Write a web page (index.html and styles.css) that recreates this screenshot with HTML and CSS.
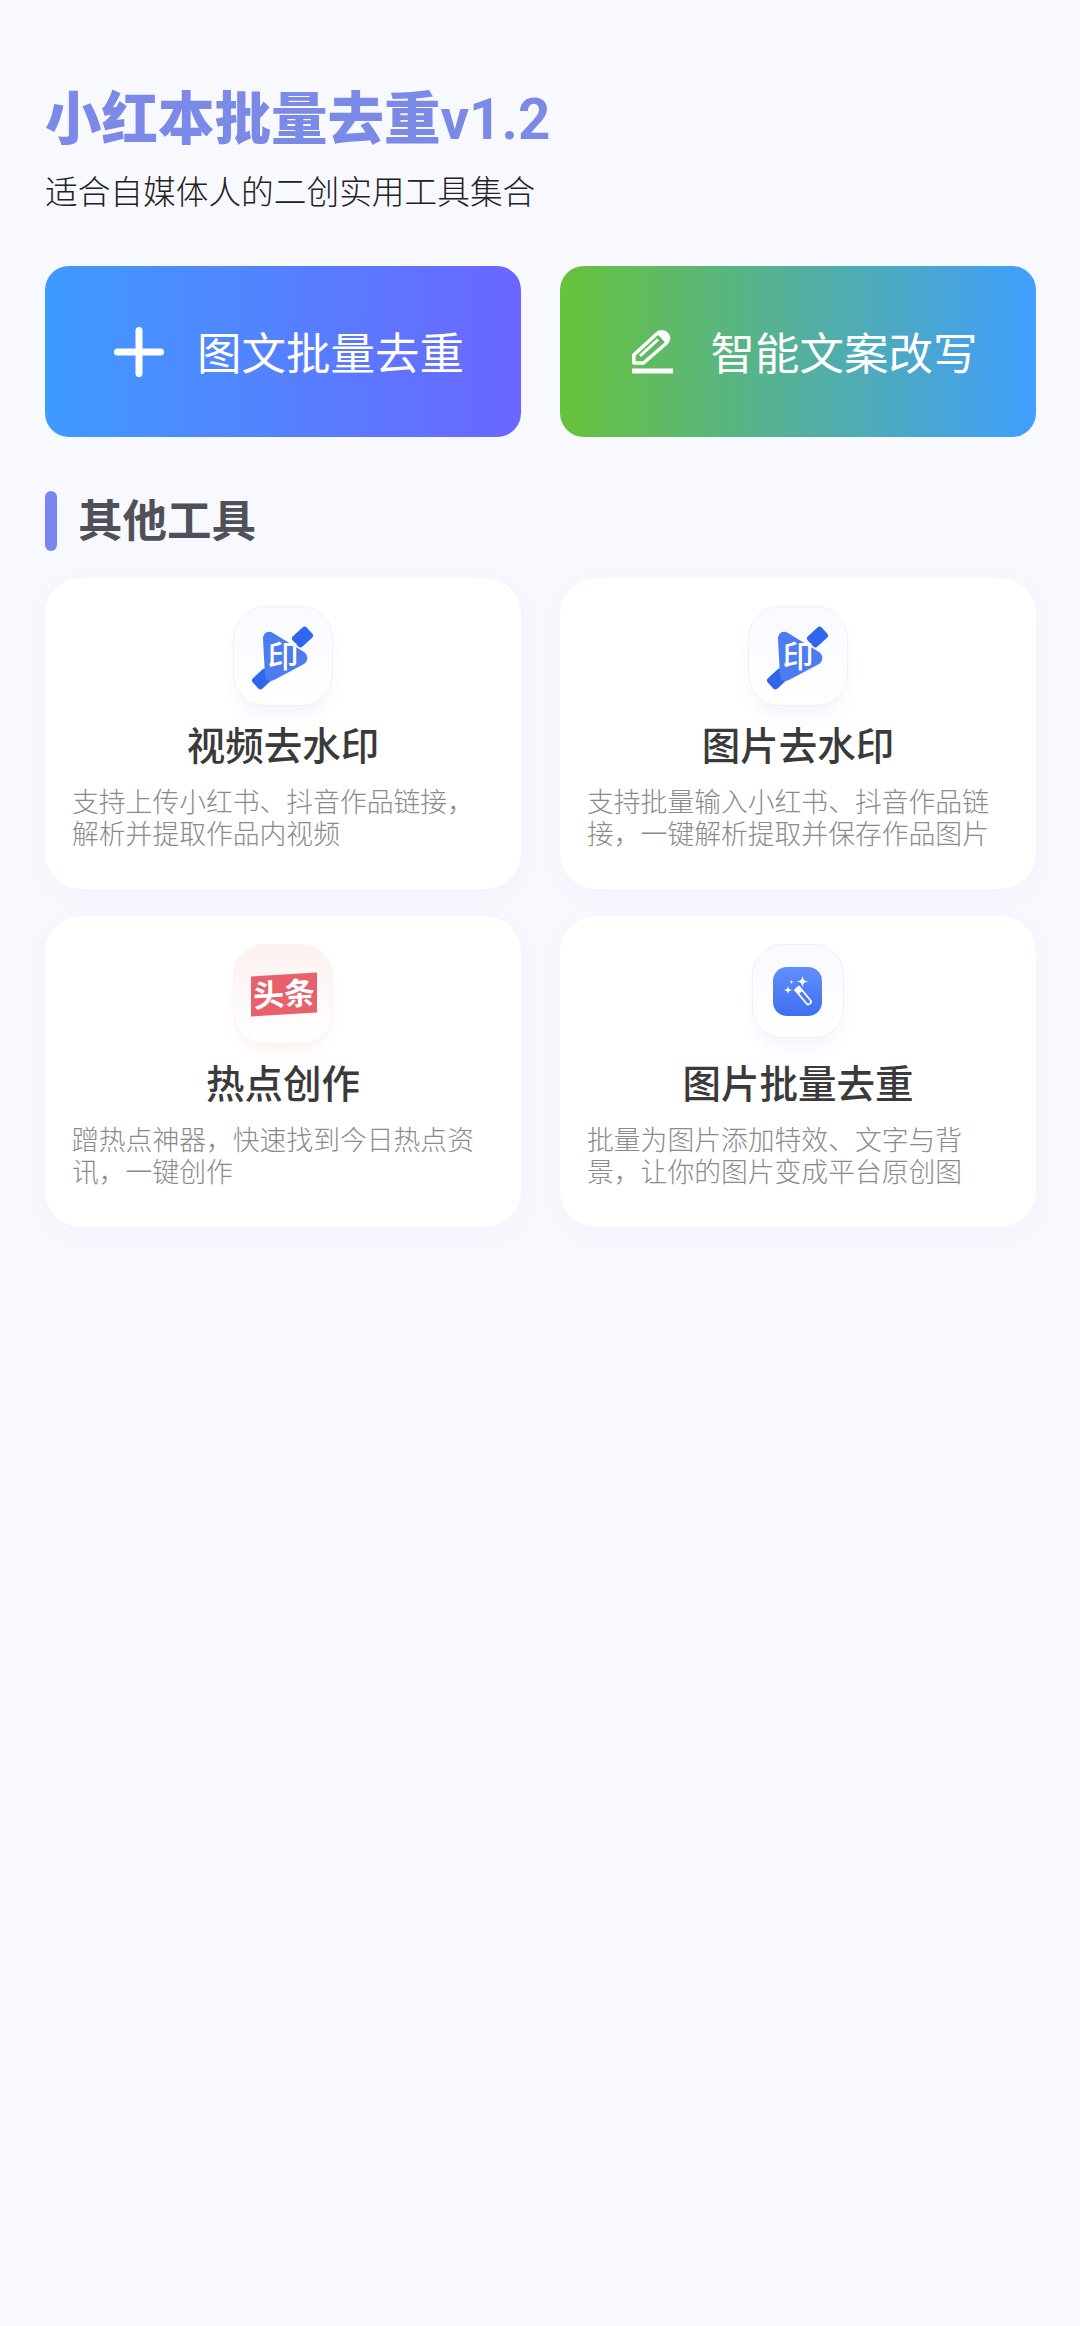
FILE: index.html
```html
<!DOCTYPE html>
<html lang="zh-CN">
<head>
    <meta charset="UTF-8">
    <meta name="viewport" content="width=device-width, initial-scale=1.0">
    <title>小红本批量去重</title>
    <link rel="stylesheet" href="styles.css">
</head>
<body>
    <div class="container">
        <h1 class="app-title">小红本批量去重<span class="app-ver">v1.2</span></h1>
        <p class="app-sub">适合自媒体人的二创实用工具集合</p>

        <div class="action-row">
            <a class="action action-blue">
                <svg class="action-icon" width="50" height="50" viewBox="0 0 50 50">
                    <path d="M25 3.5V46.5M3.5 25H46.5" stroke="#fff" stroke-width="7" stroke-linecap="round" fill="none"/>
                </svg>
                <span class="action-label">图文批量去重</span>
            </a>
            <a class="action action-green">
                <svg class="action-icon" width="42" height="46" viewBox="0 0 42 46">
                    <path d="M1.8 34V26L24 5.500C28 1.500 33.500 2.500 35.500 6C37.500 9.500 36 12.500 34 14.500L11.500 34Z" stroke="#fff" stroke-width="3.600" stroke-linejoin="round" fill="none"/>
                    <path d="M8 27L26 10.500" stroke="#fff" stroke-width="3" fill="none"/>
                    <path d="M25 4.500C29 1.500 34 3 35.500 6C37 9 36 12 34 14.500Z" fill="#fff"/>
                    <rect x="0" y="39.500" width="41" height="5" fill="#fff"/>
                </svg>
                <span class="action-label">智能文案改写</span>
            </a>
        </div>

        <div class="section-head">
            <i class="section-bar"></i>
            <h2>其他工具</h2>
        </div>

        <div class="tool-grid">
            <div class="tool-card">
                <div class="tool-icon">
                    <svg width="100" height="100" viewBox="0 0 100 100">
                        <rect x="60" y="24" width="19" height="14" rx="3" transform="rotate(-43 69.500 31)" fill="#2f66ee"/>
                        <rect x="20" y="66" width="19" height="14" rx="3" transform="rotate(-43 29.500 73)" fill="#2f66ee"/>
                        <path d="M30 33C30 27 35 24 40 27L71 46C75.500 49 75.500 55 71 58L41 74C36 76.500 32 74 32 70Z" fill="#4d7cf0"/>
                        <text class="stamp-text" x="50" y="61" font-size="31" text-anchor="middle">印</text>
                    </svg>
                </div>
                <h3>视频去水印</h3>
                <p>支持上传小红书、抖音作品链接，解析并提取作品内视频</p>
            </div>
            <div class="tool-card">
                <div class="tool-icon">
                    <svg width="100" height="100" viewBox="0 0 100 100">
                        <rect x="60" y="24" width="19" height="14" rx="3" transform="rotate(-43 69.500 31)" fill="#2f66ee"/>
                        <rect x="20" y="66" width="19" height="14" rx="3" transform="rotate(-43 29.500 73)" fill="#2f66ee"/>
                        <path d="M30 33C30 27 35 24 40 27L71 46C75.500 49 75.500 55 71 58L41 74C36 76.500 32 74 32 70Z" fill="#4d7cf0"/>
                        <text class="stamp-text" x="50" y="61" font-size="31" text-anchor="middle">印</text>
                    </svg>
                </div>
                <h3>图片去水印</h3>
                <p>支持批量输入小红书、抖音作品链接，一键解析提取并保存作品图片</p>
            </div>
            <div class="tool-card">
                <div class="tool-icon tool-icon-red">
                    <svg width="100" height="100" viewBox="0 0 100 100">
                        <path d="M18 32.500L84 28.500V68.500L18 72.500Z" fill="#e8606c"/>
                        <text class="badge-text" x="51" y="61.500" font-size="31" text-anchor="middle" transform="rotate(-3.500 51 51)">头条</text>
                    </svg>
                </div>
                <h3>热点创作</h3>
                <p>蹭热点神器，快速找到今日热点资讯，一键创作</p>
            </div>
            <div class="tool-card">
                <div class="tool-icon tool-icon-small">
                    <svg width="92" height="94" viewBox="0 0 92 94">
                        <defs>
                            <linearGradient id="wandBg" x1="0" y1="0" x2="0" y2="1">
                                <stop offset="0" stop-color="#5f8ffb"/>
                                <stop offset="1" stop-color="#3f6ff0"/>
                            </linearGradient>
                        </defs>
                        <g transform="translate(0 2)">
                            <rect x="21" y="21" width="49" height="49" rx="14" fill="url(#wandBg)"/>
                            <path d="M50.500 29C51.100 34 52 35 57 35.500C52 36 51.100 37 50.500 42C49.900 37 49 36 44 35.500C49 35 49.900 34 50.500 29Z" fill="#fff"/>
                            <path d="M36 39.500C36.500 43 37 43.500 40.500 44C37 44.500 36.500 45 36 48.500C35.500 45 35 44.500 31.500 44C35 43.500 35.500 43 36 39.500Z" fill="#fff"/>
                            <path d="M39.500 33.500C39.800 35.500 40 35.700 42 36C40 36.300 39.800 36.500 39.500 38.500C39.200 36.500 39 36.300 37 36C39 35.700 39.200 35.500 39.500 33.500Z" fill="#fff"/>
                            <path d="M43 44L47 40.500L59 55C60 56.500 56.500 59.500 55 58Z" fill="none" stroke="#fff" stroke-width="1.800" stroke-linejoin="round"/>
                            <path d="M43 44L47 40.500L50.500 44.800L46.500 48.300Z" fill="#fff"/>
                        </g>
                    </svg>
                </div>
                <h3>图片批量去重</h3>
                <p>批量为图片添加特效、文字与背景，让你的图片变成平台原创图</p>
            </div>
        </div>
    </div>
</body>
</html>
```

FILE: styles.css
```css
* {
    box-sizing: border-box;
}
body {
    margin: 0;
    background-color: #f8f9fe;
    font-family: Roboto, "Noto Sans CJK SC", sans-serif;
    color: #333;
}
.container {
    padding: 82px 44px 0 45px;
    min-height: 2326px;
}
.app-title {
    margin: 0;
    font-size: 56.5px;
    line-height: 76px;
    font-weight: 900;
    color: #7b8ae6;
}
.app-ver {
    font-weight: 700;
}
.app-sub {
    margin: 10px 0 0;
    font-size: 32.7px;
    line-height: 50px;
    font-weight: 300;
    color: #222;
}
.action-row {
    display: grid;
    grid-template-columns: 1fr 1fr;
    gap: 39px;
    margin-top: 48px;
}
.action {
    display: flex;
    align-items: center;
    justify-content: center;
    gap: 33px;
    height: 171px;
    padding-left: 12px;
    border-radius: 24px;
    color: #fff;
    font-size: 44.5px;
}
.action-label {
    margin-top: -3px;
}
.action-blue {
    background: linear-gradient(90deg, #3e9bff, #6b66ff);
}
.action-green {
    gap: 36px;
    padding-left: 14px;
    background: linear-gradient(90deg, #67c23a, #409eff);
}
.action-icon {
    flex: none;
}
.section-head {
    display: flex;
    align-items: center;
    gap: 21px;
    margin-top: 54px;
}
.section-bar {
    width: 12px;
    height: 60px;
    border-radius: 6px;
    background-color: #7886f0;
}
.section-head h2 {
    margin: 2px 0 0;
    font-size: 44.5px;
    line-height: 58px;
    font-weight: 700;
    color: #50505a;
}
.tool-grid {
    display: grid;
    grid-template-columns: 1fr 1fr;
    column-gap: 39px;
    row-gap: 27px;
    margin-top: 27px;
}
.tool-card {
    height: 311px;
    padding: 28px 27px 0;
    border-radius: 36px;
    background-color: #fff;
    box-shadow: 0 6px 24px rgba(110, 130, 230, 0.05);
}
.tool-icon {
    position: relative;
    width: 100px;
    height: 100px;
    margin: 0 auto;
    border: 1px solid #eef1fa;
    border-radius: 32px;
    background: linear-gradient(180deg, #f8faff, #fff);
    box-shadow: 0 12px 16px -4px rgba(100, 120, 255, 0.08);
}
.tool-icon svg {
    position: absolute;
    left: -1px;
    top: -1px;
}
.tool-icon-red {
    border-color: #fdf1f1;
    background: linear-gradient(180deg, #fdf1f1, #fff);
    box-shadow: 0 10px 14px -6px rgba(240, 110, 110, 0.12);
}
.tool-icon-small {
    width: 92px;
    height: 94px;
    border-radius: 30px;
}
.tool-card h3 {
    margin: 19px 0 0;
    height: 44px;
    font-size: 38.5px;
    line-height: 44px;
    font-weight: 500;
    text-align: center;
    color: #3a3a3a;
}
.tool-icon-small + h3 {
    margin-top: 25px;
}
.tool-card p {
    margin: 18px 0 0;
    font-size: 26.8px;
    line-height: 32px;
    font-weight: 300;
    color: #8a8a8a;
}
.stamp-text {
    font-family: "Noto Sans CJK SC", sans-serif;
    font-weight: 500;
    fill: #fff;
}
.badge-text {
    font-family: "Noto Sans CJK SC", sans-serif;
    font-weight: 700;
    fill: #fff;
}
```
